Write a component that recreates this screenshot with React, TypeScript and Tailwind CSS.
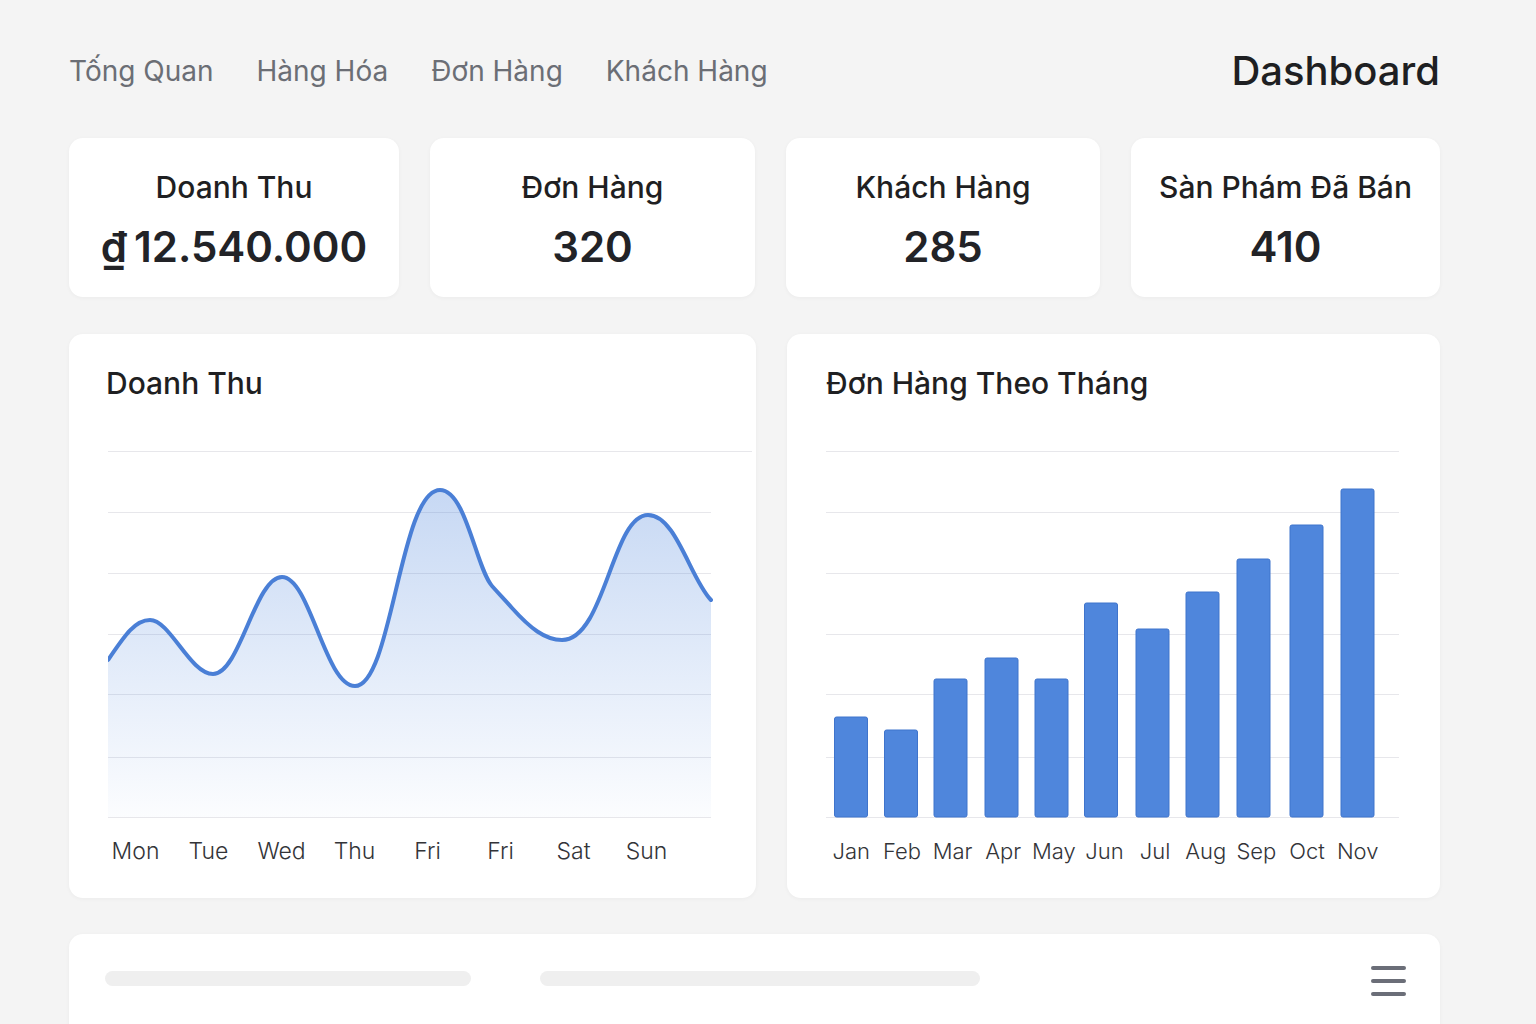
import React from "react";

const days = ["Mon", "Tue", "Wed", "Thu", "Fri", "Fri", "Sat", "Sun"];
const months = ["Jan", "Feb", "Mar", "Apr", "May", "Jun", "Jul", "Aug", "Sep", "Oct", "Nov"];
const barTops = [717, 730, 679, 658, 679, 603, 629, 592, 559, 525, 489];
const barCenters = [851, 901, 950.5, 1001.5, 1051.5, 1101, 1152.5, 1202.5, 1253.5, 1306.5, 1357.5];
const gridYs = [451, 512, 573, 634, 694, 757, 817];

const curve =
  "M108,660 C125,635 135,620 150,620 C170,620 190,674 213,674 C240,674 255,577 282,577 C310,577 325,686 355,686 C392,686 400,490 440,490 C466,490 476,568 492,586 C500,595 505,600 512,608 C530,628 545,640 562,640 C605,640 612,515 648,515 C676,515 690,578 711,600";

function StatCard({ title, value }: { title: string; value: string }) {
  return (
    <div className="bg-white rounded-[14px] shadow-[0_1px_4px_rgba(0,0,0,0.04)] flex flex-col items-center pt-[31px]">
      <div className="text-[30px] leading-[36px] font-medium text-[#1f1f22] whitespace-nowrap">{title}</div>
      <div className="mt-[18px] text-[42px] leading-[48px] font-semibold text-[#222327] whitespace-nowrap">{value}</div>
    </div>
  );
}

export default function App() {
  return (
    <div
      className="h-[1024px] overflow-hidden bg-[#f4f4f4] pl-[69px] pr-[96px] pt-[46px]"
      style={{ fontFamily: "Inter, 'Noto Sans', sans-serif" }}
    >
      <header className="flex items-center justify-between h-[50px]">
        <nav className="flex items-center gap-[43px] text-[28px] text-[#6b6e75]">
          <span>Tống Quan</span>
          <span>Hàng Hóa</span>
          <span>Đơn Hàng</span>
          <span>Khách Hàng</span>
        </nav>
        <h1 className="text-[40px] font-medium text-[#1e1f22]">Dashboard</h1>
      </header>

      <div className="mt-[42px] grid grid-cols-[330px_325px_314px_309px] gap-[31px] h-[159px]">
        <StatCard title="Doanh Thu" value={"₫\u200912.540.000"} />
        <StatCard title="Đơn Hàng" value="320" />
        <StatCard title="Khách Hàng" value="285" />
        <StatCard title="Sàn Phám Đã Bán" value="410" />
      </div>

      <div className="mt-[37px] grid grid-cols-[687px_653px] gap-[31px] h-[564px]">
        <div className="bg-white rounded-[14px] shadow-[0_1px_4px_rgba(0,0,0,0.04)] pt-[31px]">
          <div className="pl-[37px] text-[30px] leading-[36px] font-medium text-[#1f1f22]">Doanh Thu</div>
          <svg className="mt-[50px] ml-[39px] block" width="648" height="367" viewBox="108 451 648 367">
            <defs>
              <linearGradient id="areaGrad" gradientUnits="userSpaceOnUse" x1="0" y1="490" x2="0" y2="817">
                <stop offset="0" stopColor="#4f86dc" stopOpacity="0.32" />
                <stop offset="1" stopColor="#4f86dc" stopOpacity="0.02" />
              </linearGradient>
            </defs>
            {gridYs.map((y, i) => (
              <line key={i} x1="108" x2={i === 0 ? 752 : 711} y1={y + 0.5} y2={y + 0.5} stroke="#e7e7eb" strokeWidth="1" />
            ))}
            <path d={curve + " L711,817 L108,817 Z"} fill="url(#areaGrad)" />
            <path d={curve} fill="none" stroke="#4a7fd6" strokeWidth="4" strokeLinecap="round" strokeLinejoin="round" />
          </svg>
          <div className="mt-[18px] ml-[30px] w-[584px] grid grid-cols-8 text-[23px] leading-[30px] font-light text-[#333438]">
            {days.map((d, i) => (
              <span key={i} className="text-center">{d}</span>
            ))}
          </div>
        </div>

        <div className="bg-white rounded-[14px] shadow-[0_1px_4px_rgba(0,0,0,0.04)] pt-[31px]">
          <div className="pl-[39px] text-[30px] leading-[36px] font-medium text-[#1f1f22] whitespace-nowrap">Đơn Hàng Theo Tháng</div>
          <svg className="mt-[50px] ml-[39px] block" width="573" height="367" viewBox="826 451 573 367">
            {gridYs.map((y, i) => (
              <line key={i} x1="826" x2="1399" y1={y + 0.5} y2={y + 0.5} stroke="#e7e7eb" strokeWidth="1" />
            ))}
            {barCenters.map((c, i) => (
              <rect
                key={i}
                x={c - 16.5}
                y={barTops[i]}
                width="33"
                height={817 - barTops[i]}
                rx="2"
                fill="#4f86dc"
                stroke="#3f74cc"
                strokeWidth="1"
              />
            ))}
          </svg>
          <div className="mt-[18px] ml-[39px] w-[557px] grid grid-cols-11 text-[22px] leading-[30px] font-light text-[#333438]">
            {months.map((m, i) => (
              <span key={i} className="text-center">{m}</span>
            ))}
          </div>
        </div>
      </div>

      <div className="mt-[36px] bg-white rounded-t-[14px] shadow-[0_1px_4px_rgba(0,0,0,0.04)] h-[120px] flex items-start pt-[32px] pl-[36px] pr-[34px]">
        <div className="mt-[5px] w-[366px] h-[15px] rounded-full bg-[#efefef]" />
        <div className="mt-[5px] ml-[69px] w-[440px] h-[15px] rounded-full bg-[#efefef]" />
        <div className="ml-auto flex flex-col gap-[9px] w-[35px]">
          <div className="h-[4px] rounded-full bg-[#6b6e78]" />
          <div className="h-[4px] rounded-full bg-[#6b6e78]" />
          <div className="h-[4px] rounded-full bg-[#6b6e78]" />
        </div>
      </div>
    </div>
  );
}
